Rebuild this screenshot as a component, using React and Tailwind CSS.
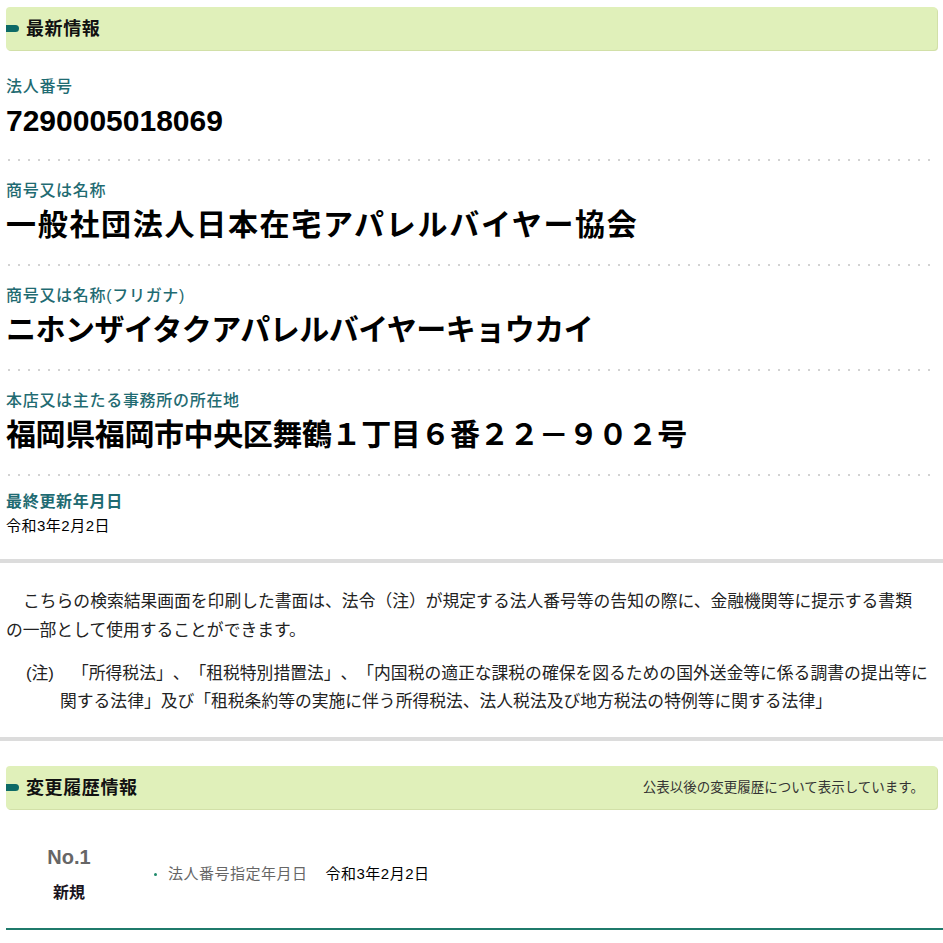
const ITEMS = [
  { label: '法人番号', value: '7290005018069', track: 'tracking-normal' },
  { label: '商号又は名称', value: '一般社団法人日本在宅アパレルバイヤー協会', track: 'tracking-[1.7px]' },
  { label: '商号又は名称(フリガナ)', value: 'ニホンザイタクアパレルバイヤーキョウカイ', track: 'tracking-[-0.5px]' },
  { label: '本店又は主たる事務所の所在地', value: '福岡県福岡市中央区舞鶴１丁目６番２２－９０２号', track: 'tracking-[-0.4px]' },
]

function SectionHeader({ title, note }) {
  return (
    <div className="mx-[6px] flex h-[43px] items-center rounded-[4px] bg-[#e0f0ba] shadow-[1px_1px_0_#d2e0a8]">
      <span className="h-[7px] w-[13px] rounded-l-[2px] rounded-r-full bg-[#0d6a66]" />
      <span className="ml-[7px] pt-[2px] text-[18px] font-semibold tracking-[0.6px] text-[#111]">{title}</span>
      {note && (
        <span className="ml-auto pr-[13px] pt-[2px] text-[13.5px] text-[#333]">{note}</span>
      )}
    </div>
  )
}

function Dots() {
  return (
    <div className="ml-[2px] h-[2px] bg-[linear-gradient(to_right,#d2d2d2_0_2px,transparent_2px)] bg-[length:10px_2px]" />
  )
}

export default function App() {
  return (
    <div className="min-h-[943px] bg-white pt-[7px] font-['Liberation_Sans','Noto_Sans_CJK_JP',sans-serif] text-[#222] [text-spacing-trim:space-all]">
      <SectionHeader title="最新情報" />

      {/* Basic info */}
      <div className="px-[6px]">
        {ITEMS.map((item, i) => (
          <div key={i}>
            <div className={i === 0 ? 'pt-[27px] pb-[20px]' : 'pt-[20px] pb-[21px]'}>
              <div className="text-[16px] font-medium leading-[20px] tracking-[0.7px] text-[#1f6b72]">{item.label}</div>
              <div className={`mt-[6px] whitespace-nowrap text-[30px] font-bold leading-[36px] text-black ${item.track}`}>{item.value}</div>
            </div>
            <Dots />
          </div>
        ))}
        <div className="pt-[16px] pb-[23px]">
          <div className="text-[16px] font-semibold leading-[20px] tracking-[0.7px] text-[#1f6b72]">最終更新年月日</div>
          <div className="mt-[4px] text-[15px] leading-[20px] tracking-[0.5px] text-black">令和3年2月2日</div>
        </div>
      </div>

      <div className="h-[4px] bg-[#dcdcdc]" />

      {/* Notice */}
      <div className="px-[6px] pt-[24px] pb-[21px] text-[16.8px] text-[#222]">
        <div className="leading-[29px] whitespace-nowrap">
          <div className="pl-[17px]">こちらの検索結果画面を印刷した書面は、法令（注）が規定する法人番号等の告知の際に、金融機関等に提示する書類</div>
          <div>の一部として使用することができます。</div>
        </div>
        <div className="mt-[15px] pl-[20px] leading-[28px] whitespace-nowrap">
          <div className="flex">
            <span className="w-[46px]">(注)</span>
            <span>「所得税法」、「租税特別措置法」、「内国税の適正な課税の確保を図るための国外送金等に係る調書の提出等に</span>
          </div>
          <div className="pl-[34px]">関する法律」及び「租税条約等の実施に伴う所得税法、法人税法及び地方税法の特例等に関する法律」</div>
        </div>
      </div>

      <div className="h-[4px] bg-[#dcdcdc]" />

      {/* History */}
      <div className="mt-[25px]">
        <SectionHeader title="変更履歴情報" note="公表以後の変更履歴について表示しています。" />
      </div>

      <div className="ml-[6px] flex items-center border-b-2 border-[#1f7a6b] pt-[36px] pb-[25px]">
        <div className="flex w-[126px] flex-col items-center">
          <div className="text-[20px] font-bold leading-[24px] text-[#666]">No.1</div>
          <div className="mt-[14px] text-[16px] font-bold leading-[20px] text-[#1a1420]">新規</div>
        </div>
        <div className="ml-[22px] flex items-center text-[15px] tracking-[0.5px]">
          <span className="h-[3px] w-[3px] rounded-full bg-[#1f8a6b]" />
          <span className="ml-[11px] text-[#666]">法人番号指定年月日</span>
          <span className="ml-[18px] text-black">令和3年2月2日</span>
        </div>
      </div>
    </div>
  )
}
